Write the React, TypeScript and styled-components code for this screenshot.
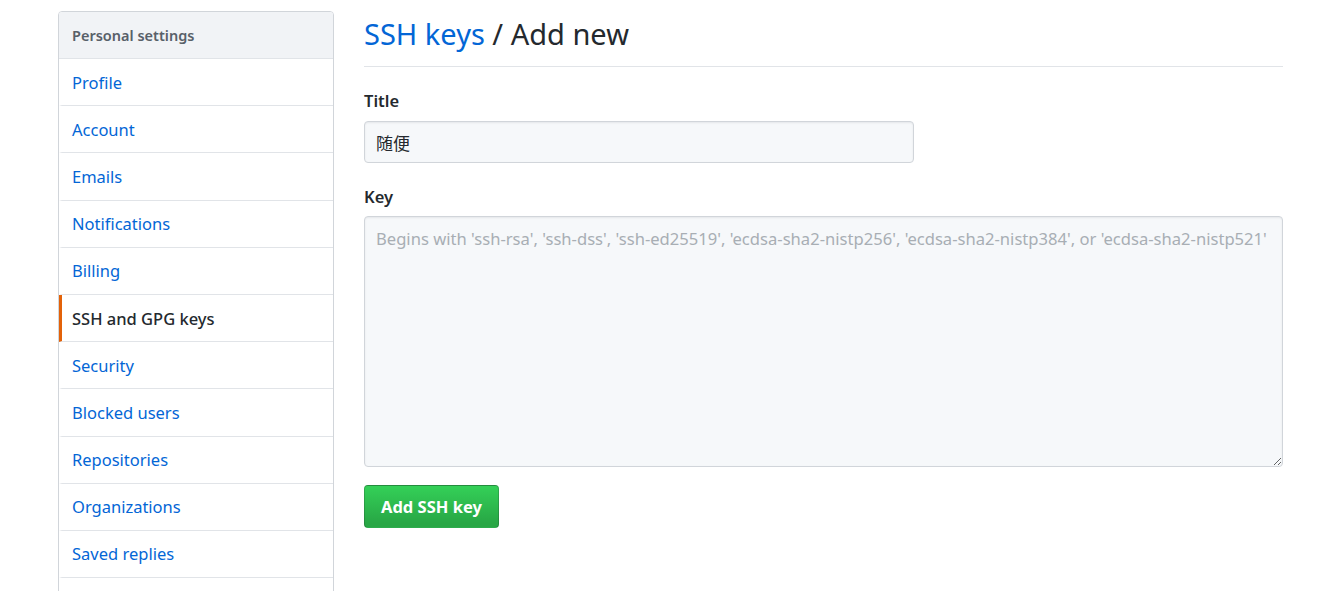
import React from 'react';
import styled, { createGlobalStyle } from 'styled-components';

const GlobalStyle = createGlobalStyle`
  html, body {
    margin: 0;
    padding: 0;
    background: #fff;
    font-family: "Noto Sans", "Noto Sans CJK SC", sans-serif;
    color: #24292e;
  }
`;

const Page = styled.div`
  display: flex;
  align-items: flex-start;
  gap: 30px;
  padding: 11px 41px 0 58px;
`;

const Menu = styled.nav`
  width: 276px;
  flex-shrink: 0;
  border: 1px solid #d1d5da;
  border-radius: 4px;
  overflow: hidden;
  box-sizing: border-box;
`;

const MenuHeading = styled.div`
  height: 46px;
  display: flex;
  align-items: center;
  padding: 0 13px;
  background: #f1f3f6;
  border-bottom: 1px solid #e1e4e8;
  font-size: 14.5px;
  font-weight: 600;
  color: #586069;
`;

const MenuItem = styled.a<{ $selected?: boolean }>`
  display: flex;
  align-items: center;
  height: 46.2px;
  padding: 0 13px 0 10px;
  border-bottom: 1px solid #e1e4e8;
  border-left: 3px solid ${p => (p.$selected ? '#e36209' : 'transparent')};
  font-size: 16.5px;
  color: ${p => (p.$selected ? '#24292e' : '#0366d6')};
  font-weight: ${p => (p.$selected ? 500 : 400)};
  text-decoration: none;
  cursor: pointer;
`;

const Main = styled.main`
  flex: 1;
  padding-top: 6px;
`;

const Subhead = styled.div`
  border-bottom: 1px solid #e1e4e8;
  padding-bottom: 15px;
  margin-bottom: 22px;
`;

const Heading = styled.h2`
  margin: 0;
  font-size: 29px;
  font-weight: 400;
  line-height: 34px;
  color: #24292e;
`;

const Crumb = styled.a`
  color: #0366d6;
  text-decoration: none;
`;

const Field = styled.div`
  margin-bottom: 22px;
`;

const Label = styled.label`
  display: block;
  font-size: 16.5px;
  font-weight: 600;
  margin-bottom: 8px;
`;

const TextInput = styled.input`
  box-sizing: border-box;
  width: 550px;
  height: 42px;
  margin-top: 1px;
  padding: 0 11px;
  font-family: "Noto Sans", "Noto Sans CJK SC", sans-serif;
  font-size: 17px;
  color: #24292e;
  background: #f6f8fa;
  border: 1px solid #d1d5da;
  border-radius: 4px;
  box-shadow: inset 0 1px 2px rgba(27, 31, 35, 0.075);
  outline: none;
`;

const KeyArea = styled.textarea`
  box-sizing: border-box;
  display: block;
  width: 100%;
  height: 251px;
  padding: 10px 11px;
  font-family: "Noto Sans", "Noto Sans CJK SC", sans-serif;
  font-size: 16.6px;
  line-height: 24px;
  color: #24292e;
  background: #f6f8fa;
  border: 1px solid #d1d5da;
  border-radius: 4px;
  box-shadow: inset 0 1px 2px rgba(27, 31, 35, 0.075);
  outline: none;
  resize: vertical;

  &::placeholder {
    color: #a8aeb4;
  }
`;

const SubmitButton = styled.button`
  height: 43px;
  padding: 0 16px;
  margin-top: -4px;
  font-family: "Noto Sans", sans-serif;
  font-size: 16.5px;
  font-weight: 700;
  color: #fff;
  background-image: linear-gradient(-180deg, #34d058 0%, #28a745 90%);
  border: 1px solid rgba(27, 31, 35, 0.2);
  border-radius: 4px;
  cursor: pointer;
`;

const items = [
  'Profile',
  'Account',
  'Emails',
  'Notifications',
  'Billing',
  'SSH and GPG keys',
  'Security',
  'Blocked users',
  'Repositories',
  'Organizations',
  'Saved replies',
  'Applications',
];

export default function App() {
  return (
    <>
      <GlobalStyle />
      <Page>
        <Menu>
          <MenuHeading>Personal settings</MenuHeading>
          {items.map(item => (
            <MenuItem key={item} $selected={item === 'SSH and GPG keys'}>
              {item}
            </MenuItem>
          ))}
        </Menu>
        <Main>
          <Subhead>
            <Heading>
              <Crumb>SSH keys</Crumb> / Add new
            </Heading>
          </Subhead>
          <Field>
            <Label>Title</Label>
            <TextInput type="text" defaultValue="随便" />
          </Field>
          <Field>
            <Label>Key</Label>
            <KeyArea placeholder="Begins with 'ssh-rsa', 'ssh-dss', 'ssh-ed25519', 'ecdsa-sha2-nistp256', 'ecdsa-sha2-nistp384', or 'ecdsa-sha2-nistp521'" />
          </Field>
          <SubmitButton>Add SSH key</SubmitButton>
        </Main>
      </Page>
    </>
  );
}
